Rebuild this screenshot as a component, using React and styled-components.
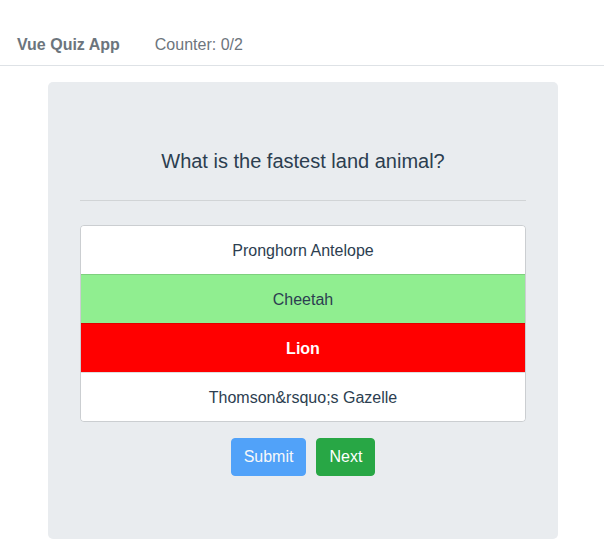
import styled, { createGlobalStyle } from "styled-components";

const GlobalStyle = createGlobalStyle`
  * {
    box-sizing: border-box;
  }
  body {
    margin: 0;
    background: #ffffff;
    font-family: "Liberation Sans", Arial, sans-serif;
    color: #2c3e50;
  }
`;

const answers = [
  { text: "Pronghorn Antelope", state: "idle" },
  { text: "Cheetah", state: "correct" },
  { text: "Lion", state: "wrong" },
  { text: "Thomson&rsquo;s Gazelle", state: "idle" },
];

function App() {
  return (
    <>
      <GlobalStyle />
      <Header>
        <Brand>Vue Quiz App</Brand>
        <Counter>Counter: 0/2</Counter>
      </Header>
      <Container>
        <Jumbotron>
          <Question>What is the fastest land animal?</Question>
          <Divider />
          <AnswerList>
            {answers.map((answer) => (
              <Answer key={answer.text} state={answer.state}>
                {answer.text}
              </Answer>
            ))}
          </AnswerList>
          <Actions>
            <Button color="#007bff" disabled>
              Submit
            </Button>
            <Button color="#28a745">Next</Button>
          </Actions>
        </Jumbotron>
      </Container>
    </>
  );
}

export default App;

const Header = styled.nav`
  display: flex;
  align-items: center;
  gap: 35px;
  padding: 33px 17px 8px;
  border-bottom: 1px solid #dee2e6;
  line-height: 24px;
  font-size: 16px;
  color: #6c757d;
`;

const Brand = styled.span`
  font-weight: 700;
`;

const Counter = styled.span`
  font-weight: 400;
`;

const Container = styled.div`
  width: 540px;
  margin: 0 auto;
  padding: 16px 14px 0 16px;
`;

const Jumbotron = styled.div`
  background-color: #e9ecef;
  border-radius: 5px;
  padding: 64px 32px 63px;
  display: flex;
  flex-direction: column;
`;

const Question = styled.p`
  margin: 0;
  font-size: 20px;
  line-height: 30px;
  font-weight: 400;
  text-align: center;
`;

const Divider = styled.hr`
  margin: 24px 0;
  border: 0;
  border-top: 1px solid rgba(0, 0, 0, 0.1);
`;

const AnswerList = styled.ul`
  list-style: none;
  margin: 0;
  padding: 0;
  display: flex;
  flex-direction: column;
  border-radius: 4px;
  overflow: hidden;
  border: 1px solid rgba(0, 0, 0, 0.125);
`;

const Answer = styled.li`
  padding: 13px 20px 11px;
  line-height: 24px;
  font-size: 16px;
  text-align: center;
  border-top: 1px solid rgba(0, 0, 0, 0.125);
  background-color: ${(props) =>
    props.state === "correct"
      ? "#90ee90"
      : props.state === "wrong"
      ? "#ff0000"
      : "#ffffff"};
  color: ${(props) => (props.state === "wrong" ? "#ffffff" : "#2c3e50")};
  font-weight: ${(props) => (props.state === "wrong" ? 700 : 400)};
  &:first-child {
    border-top: 0;
  }
`;

const Actions = styled.div`
  display: flex;
  justify-content: center;
  gap: 10px;
  margin-top: 16px;
`;

const Button = styled.button`
  height: 38px;
  padding: 6px 12px;
  border: 1px solid ${(props) => props.color};
  border-radius: 4px;
  background-color: ${(props) => props.color};
  color: #ffffff;
  font-family: "Liberation Sans", Arial, sans-serif;
  font-size: 16px;
  line-height: 24px;
  cursor: pointer;
  &:disabled {
    opacity: 0.65;
    cursor: default;
  }
`;
